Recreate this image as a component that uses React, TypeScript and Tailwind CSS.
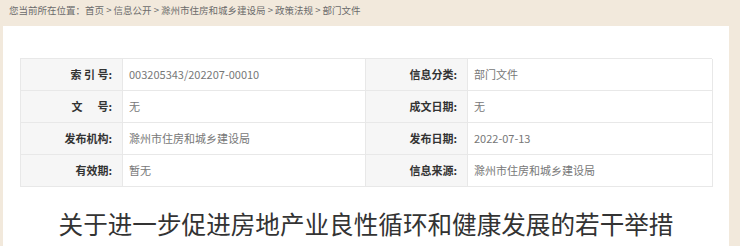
import React from "react";

const rows: [string, string, string, string][] = [
  ["索 引 号:", "003205343/202207-00010", "信息分类:", "部门文件"],
  ["文\u00a0\u00a0\u00a0\u00a0\u00a0\u00a0号:", "无", "成文日期:", "无"],
  ["发布机构:", "滁州市住房和城乡建设局", "发布日期:", "2022-07-13"],
  ["有效期:", "暂无", "信息来源:", "滁州市住房和城乡建设局"],
];

export default function App() {
  return (
    <div
      className="w-[740px] h-[246px] overflow-hidden bg-[#f2e9dc]"
      style={{ fontFamily: '"Noto Sans CJK SC", "Noto Sans", sans-serif' }}
    >
      <div className="h-[26px] pl-[9px] pt-[4px] text-[9.5px] leading-[13px] text-[#6b6b6b]">
        您当前所在位置：首页 &gt; 信息公开 &gt; 滁州市住房和城乡建设局 &gt; 政策法规 &gt; 部门文件
      </div>
      <div className="ml-[3px] w-[726px] h-[220px] bg-white px-[17px] pt-[32px]">
        <div className="grid grid-cols-[102px_243px_102px_245px] border-t border-l border-[#e8e8e8]">
          {rows.map((r, i) => (
            <React.Fragment key={i}>
              <div className="h-[32px] border-r border-b border-[#e8e8e8] bg-[#f6f6f6] flex items-center justify-end pr-[10px] text-[11px] font-bold text-[#333]">
                {r[0]}
              </div>
              <div className="h-[32px] border-r border-b border-[#e8e8e8] flex items-center pl-[6px] text-[11px] text-[#777]">
                {r[1]}
              </div>
              <div className="h-[32px] border-r border-b border-[#e8e8e8] bg-[#f6f6f6] flex items-center justify-end pr-[10px] text-[11px] font-bold text-[#333]">
                {r[2]}
              </div>
              <div className="h-[32px] border-r border-b border-[#e8e8e8] flex items-center pl-[6px] text-[11px] text-[#777]">
                {r[3]}
              </div>
            </React.Fragment>
          ))}
        </div>
        <div className="mt-[18px] text-center text-[24.6px] leading-[36px] text-[#333]">
          关于进一步促进房地产业良性循环和健康发展的若干举措
        </div>
      </div>
    </div>
  );
}
